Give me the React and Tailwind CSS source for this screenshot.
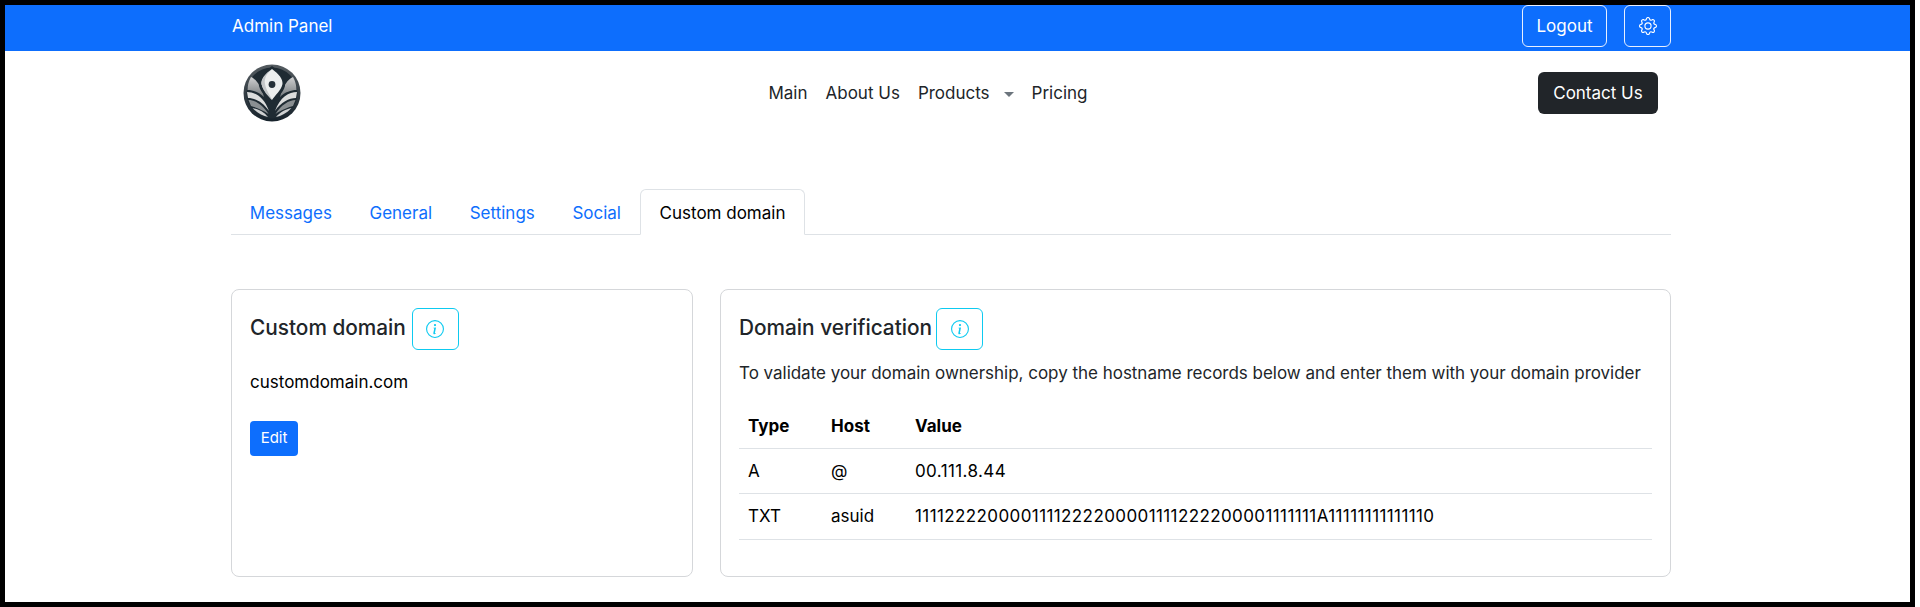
import { BsGear, BsInfoCircle } from "react-icons/bs";

function Logo() {
  return (
    <svg width="58" height="58" viewBox="0 0 58 58" className="block">
      <defs>
        <linearGradient id="ring" x1="0" y1="0" x2="0" y2="1">
          <stop offset="0" stopColor="#555c61" />
          <stop offset="1" stopColor="#16222b" />
        </linearGradient>
        <linearGradient id="petal" x1="0" y1="0" x2="0" y2="1">
          <stop offset="0" stopColor="#d0d1d2" />
          <stop offset="1" stopColor="#74797c" />
        </linearGradient>
      </defs>
      <circle cx="29" cy="29" r="28.5" fill="url(#ring)" />
      <circle cx="29" cy="29" r="25.5" fill="#1f2b33" />
      <path d="M8 13 C13 15 18 22 21 33 C16 28 10 26 4.5 26 C4.5 22 5.5 17 8 13Z" fill="url(#petal)" />
      <path d="M50 13 C45 15 40 22 37 33 C42 28 48 26 53.5 26 C53.5 22 52.5 17 50 13Z" fill="url(#petal)" />
      <path d="M29 2 C20 9 15 16 16 22 C18 30 25 33 29 40 C33 33 40 30 42 22 C43 16 38 9 29 2Z" fill="#1f2b33" />
      <path d="M29 5 C22 10 18 15 18.5 20 C20 27 26 31 29 36 C32 31 38 27 39.5 20 C40 15 36 10 29 5Z" fill="#eceeee" />
      <path d="M29 5 C24 9 21 14 22 20 C23 26 27 31 29 36 C25 32 20 27 18.5 20 C18 15 22 10 29 5Z" fill="#c4c7c9" />
      <path d="M4 28 C12 28 21 33 26 47 C20 38 12 34 5 34Z" fill="#dcdddd" />
      <path d="M54 28 C46 28 37 33 32 47 C38 38 46 34 53 34Z" fill="#dcdddd" />
      <path d="M5.5 36 C12 36 20 41 25.5 50 C20 46 12 43 8 42Z" fill="#8a8f92" />
      <path d="M52.5 36 C46 36 38 41 32.5 50 C38 46 46 43 50 42Z" fill="#8a8f92" />
      <path d="M9.5 44 C15 45 21 48 25 53 C20 52 14 49 9.5 44Z" fill="#cfd1d2" />
      <path d="M48.5 44 C43 45 37 48 33 53 C38 52 44 49 48.5 44Z" fill="#cfd1d2" />
      <circle cx="29" cy="20.5" r="3.4" fill="#253039" />
    </svg>
  );
}

function InfoButton({ className }) {
  return (
    <button className={`${className} w-[47px] h-[42px] flex items-center justify-center rounded-[6px] border border-[#0dcaf0] text-[#0dcaf0]`}>
      <BsInfoCircle size={18} />
    </button>
  );
}

const records = [
  { type: "A", host: "@", value: "00.111.8.44", rowClass: "h-[45px]" },
  { type: "TXT", host: "asuid", value: "1111222200001111222200001111222200001111111A11111111111110", rowClass: "h-[46px]" },
];

export default function App() {
  return (
    <div className="w-[1915px] h-[607px] border-[5px] border-black bg-white text-[#212529] overflow-hidden font-['Inter',sans-serif] text-[17px]">
      {/* Top bar */}
      <div className="bg-[#0d6efd] h-[46px] pl-[227px] pr-[239px] flex justify-between items-start text-white">
        <span className="leading-[46px] mt-[-2px]">Admin Panel</span>
        <div className="flex gap-[17px]">
          <button className="w-[85px] h-[42px] pt-[2px] rounded-[6px] border border-[#e8f0ff]">Logout</button>
          <button className="w-[47px] h-[42px] flex items-center justify-center rounded-[6px] border border-[#e8f0ff]">
            <BsGear size={18} />
          </button>
        </div>
      </div>

      {/* Navbar */}
      <div className="h-[84px] pl-[238px] pr-[252px] flex items-center justify-between">
        <Logo />
        <nav className="flex items-center gap-[18px] ml-[17px] pt-[2px] text-[#212529]">
          <span>Main</span>
          <span>About Us</span>
          <span className="flex items-center">
            Products
            <span className="ml-[14px] w-0 h-0 border-x-[5px] border-x-transparent border-t-[5px] border-t-[#6c757d]"></span>
          </span>
          <span>Pricing</span>
        </nav>
        <button className="w-[120px] h-[42px] pt-[2px] rounded-[6px] bg-[#212529] text-white">Contact Us</button>
      </div>

      {/* Tabs */}
      <div className="mx-[226px] mt-[54px] h-[46px] flex items-stretch border-b border-[#dee2e6] w-[1440px]">
        {["Messages", "General", "Settings", "Social"].map((t) => (
          <span key={t} className="px-[18.8px] leading-[48px] text-[#0d6efd]">{t}</span>
        ))}
        <span className="px-[18.8px] leading-[46px] text-black bg-white border border-[#dee2e6] border-b-white rounded-t-[6px] h-[46px]">
          Custom domain
        </span>
      </div>

      {/* Cards */}
      <div className="ml-[226px] mt-[54px] w-[1440px] flex gap-[27px]">
        <div className="w-[462px] h-[288px] border border-[#d5d7da] rounded-[8px] px-[18px] pt-[18px]">
          <div className="flex items-center">
            <h2 className="text-[20.8px] font-medium -mt-[2px]">Custom domain</h2>
            <InfoButton className="ml-[6px]" />
          </div>
          <p className="mt-[20px] leading-[24px] text-black">customdomain.com</p>
          <button className="mt-[27px] w-[48px] h-[35px] rounded-[4px] bg-[#0d6efd] text-white text-[15px]">Edit</button>
        </div>

        <div className="w-[951px] h-[288px] border border-[#d5d7da] rounded-[8px] px-[18px] pt-[18px]">
          <div className="flex items-center">
            <h2 className="text-[20.8px] font-medium -mt-[2px]">Domain verification</h2>
            <InfoButton className="ml-[4px]" />
          </div>
          <p className="mt-[11px] leading-[24px] tracking-[-0.02px]">
            To validate your domain ownership, copy the hostname records below and enter them with your domain provider
          </p>
          <table className="mt-[17px] w-full text-left table-fixed text-black">
            <thead>
              <tr className="h-[46px] border-b border-[#dee2e6]">
                <th className="pl-[9px] pt-[3px] w-[92px] font-bold">Type</th>
                <th className="pt-[3px] w-[84px] font-bold">Host</th>
                <th className="pt-[3px] font-bold">Value</th>
              </tr>
            </thead>
            <tbody>
              {records.map((r) => (
                <tr key={r.type} className={`${r.rowClass} border-b border-[#dee2e6]`}>
                  <td className="pl-[9px] pt-[2px]">{r.type}</td>
                  <td className="pt-[2px]">{r.host}</td>
                  <td className="pt-[2px] tracking-[0.4px]">{r.value}</td>
                </tr>
              ))}
            </tbody>
          </table>
        </div>
      </div>
    </div>
  );
}
